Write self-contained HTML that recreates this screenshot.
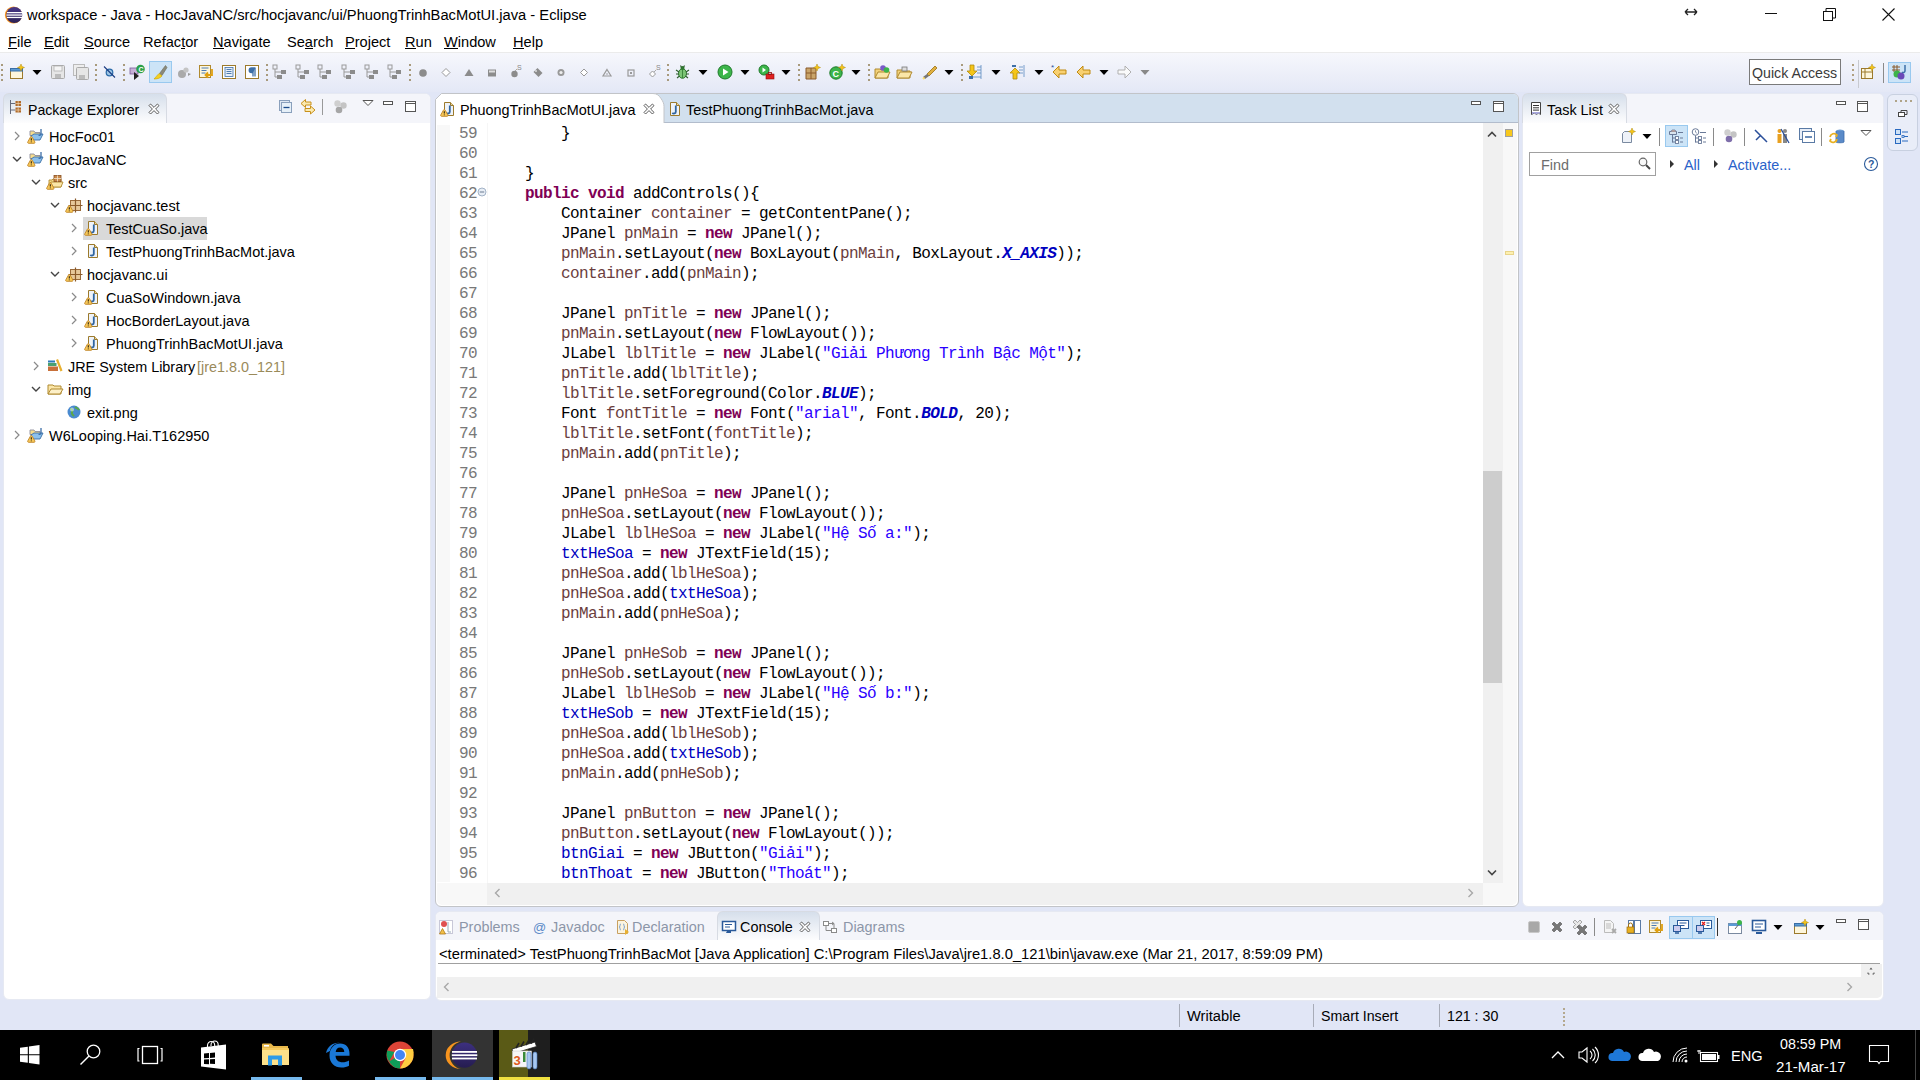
<!DOCTYPE html>
<html><head><meta charset="utf-8"><title>Eclipse</title><style>
*{box-sizing:border-box}
body{margin:0;width:1920px;height:1080px;position:relative;overflow:hidden;background:#e1e6f6;font-family:"Liberation Sans",sans-serif;font-size:14.5px;color:#000}
.a{position:absolute}
.t{position:absolute;white-space:nowrap;line-height:1}
svg{position:absolute;overflow:visible}
.code{position:absolute;left:489px;top:123px;font-family:"Liberation Mono",monospace;font-size:16px;letter-spacing:-0.6px;line-height:20px;white-space:pre;color:#000}
.nums{position:absolute;left:430px;width:47px;top:123px;font-family:"Liberation Mono",monospace;font-size:16px;letter-spacing:-0.6px;line-height:20px;text-align:right;color:#787878}
i{font-style:normal}
i.k{color:#7f0055;font-weight:bold}
i.l{color:#6a3e3e}
i.f{color:#0000c0}
i.s{color:#2a00ff}
i.c{color:#0000c0;font-weight:bold;font-style:italic}
.mn u{text-decoration:none;position:relative}.mn u::after{content:"";position:absolute;left:0;right:0;bottom:0.9px;height:1px;background:#000}
.tree div{position:absolute;white-space:nowrap;line-height:23px;height:23px}
</style></head><body>
<div class="a" style="left:0px;top:0px;width:1920px;height:28px;background:#fff"></div>
<svg style="left:3.5px;top:5.5px;" width="19" height="18" viewBox="0 0 19 18"><defs><linearGradient id="eg" x1="0" y1="0" x2="0" y2="1"><stop offset="0" stop-color="#473788"/><stop offset="1" stop-color="#2c2255"/></linearGradient></defs><circle cx="9.5" cy="9" r="8.6" fill="#f7941e"/><circle cx="10.3" cy="9" r="8" fill="url(#eg)"/><rect x="3" y="6" width="15" height="1.3" fill="#fff"/><rect x="2.5" y="8.4" width="16" height="1.3" fill="#fff"/><rect x="3" y="10.8" width="15" height="1.3" fill="#fff"/></svg>
<div class="t" style="left:27px;top:7.54px;font-size:14.72px;color:#000;font-family:'Liberation Sans';">workspace - Java - HocJavaNC/src/hocjavanc/ui/PhuongTrinhBacMotUI.java - Eclipse</div>
<svg style="left:1684.0px;top:6.0px;" width="14" height="12" viewBox="0 0 14 12"><path d="M1 6h12M1 6l3-3M1 6l3 3M13 6l-3-3M13 6l-3 3" stroke="#222" stroke-width="1.3" fill="none"/></svg>
<div class="a" style="left:1765px;top:13px;width:12px;height:1px;background:#111"></div>
<svg style="left:1822.5px;top:7.5px;" width="13" height="13" viewBox="0 0 13 13"><rect x="0.5" y="3.5" width="9" height="9" fill="none" stroke="#111"/><path d="M3 3.5v-3h9.5v9.5h-3" fill="none" stroke="#111"/></svg>
<svg style="left:1881.5px;top:7.5px;" width="13" height="13" viewBox="0 0 13 13"><path d="M0.5 0.5l12 12M12.5 0.5l-12 12" stroke="#111" stroke-width="1.1"/></svg>
<div class="a" style="left:0px;top:28px;width:1920px;height:24px;background:#fff"></div>
<div class="t mn" style="left:8px;top:34.64px;font-size:14.6px;color:#000;font-family:'Liberation Sans';"><u>F</u>ile</div>
<div class="t mn" style="left:44px;top:34.64px;font-size:14.6px;color:#000;font-family:'Liberation Sans';"><u>E</u>dit</div>
<div class="t mn" style="left:84px;top:34.64px;font-size:14.6px;color:#000;font-family:'Liberation Sans';"><u>S</u>ource</div>
<div class="t mn" style="left:143px;top:34.64px;font-size:14.6px;color:#000;font-family:'Liberation Sans';">Refac<u>t</u>or</div>
<div class="t mn" style="left:213px;top:34.64px;font-size:14.6px;color:#000;font-family:'Liberation Sans';"><u>N</u>avigate</div>
<div class="t mn" style="left:287px;top:34.64px;font-size:14.6px;color:#000;font-family:'Liberation Sans';">Se<u>a</u>rch</div>
<div class="t mn" style="left:345px;top:34.64px;font-size:14.6px;color:#000;font-family:'Liberation Sans';"><u>P</u>roject</div>
<div class="t mn" style="left:405px;top:34.64px;font-size:14.6px;color:#000;font-family:'Liberation Sans';"><u>R</u>un</div>
<div class="t mn" style="left:444px;top:34.64px;font-size:14.6px;color:#000;font-family:'Liberation Sans';"><u>W</u>indow</div>
<div class="t mn" style="left:513px;top:34.64px;font-size:14.6px;color:#000;font-family:'Liberation Sans';"><u>H</u>elp</div>
<div class="a" style="left:0px;top:52px;width:1920px;height:1px;background:#ebebeb"></div>
<div class="a" style="left:0px;top:53px;width:1920px;height:39px;background:linear-gradient(#f6f7fc,#e4e8f6)"></div>
<div class="a" style="left:1px;top:64px;width:2px;height:2px;background:#a89a7c"></div><div class="a" style="left:1px;top:69px;width:2px;height:2px;background:#a89a7c"></div><div class="a" style="left:1px;top:74px;width:2px;height:2px;background:#a89a7c"></div><div class="a" style="left:1px;top:79px;width:2px;height:2px;background:#a89a7c"></div>
<svg style="left:9.0px;top:64.0px;" width="16" height="16" viewBox="0 0 16 16"><rect x="1.5" y="4.5" width="12" height="10" fill="#fdf6dc" stroke="#9c7a2c"/><rect x="1.5" y="4.5" width="12" height="2.5" fill="#5b9bd5" stroke="#3a6ea5"/><path d="M12 0l1 2.5 2.5 1-2.5 1-1 2.5-1-2.5-2.5-1 2.5-1z" fill="#f5c518" stroke="#b08a10" stroke-width=".5"/></svg>
<svg style="left:29.0px;top:64.0px;" width="16" height="16" viewBox="0 0 16 16"><path d="M3.5 6h9l-4.5 5z" fill="#000"/></svg>
<svg style="left:50.0px;top:64.0px;" width="16" height="16" viewBox="0 0 16 16"><rect x="1.5" y="1.5" width="13" height="13" rx="1" fill="#e6e6e6" stroke="#aaa"/><rect x="4" y="2" width="8" height="5" fill="#f5f5f5" stroke="#aaa" stroke-width=".7"/><rect x="5" y="10" width="6" height="4" fill="#bbb"/></svg>
<svg style="left:73.0px;top:64.0px;" width="16" height="16" viewBox="0 0 16 16"><rect x="0.5" y="0.5" width="11" height="11" fill="#eee" stroke="#bbb"/><rect x="3.5" y="3.5" width="12" height="12" rx="1" fill="#e6e6e6" stroke="#aaa"/><rect x="6" y="11" width="6" height="4" fill="#bbb"/></svg>
<div class="a" style="left:95px;top:64px;width:2px;height:2px;background:#a89a7c"></div><div class="a" style="left:95px;top:69px;width:2px;height:2px;background:#a89a7c"></div><div class="a" style="left:95px;top:74px;width:2px;height:2px;background:#a89a7c"></div><div class="a" style="left:95px;top:79px;width:2px;height:2px;background:#a89a7c"></div>
<svg style="left:101.0px;top:64.0px;" width="16" height="16" viewBox="0 0 16 16"><circle cx="8.5" cy="8.5" r="3.3" fill="#9cc4e4" stroke="#2a6aa8" stroke-width="1.2"/><path d="M3 2.5l11 11" stroke="#1a3a80" stroke-width="1.1"/></svg>
<div class="a" style="left:123px;top:64px;width:2px;height:2px;background:#a89a7c"></div><div class="a" style="left:123px;top:69px;width:2px;height:2px;background:#a89a7c"></div><div class="a" style="left:123px;top:74px;width:2px;height:2px;background:#a89a7c"></div><div class="a" style="left:123px;top:79px;width:2px;height:2px;background:#a89a7c"></div>
<svg style="left:129.0px;top:64.0px;" width="16" height="16" viewBox="0 0 16 16"><rect x="1" y="4" width="8" height="6" fill="#c6b0d8" stroke="#7a5c9a" stroke-width=".8"/><path d="M5 8v8l5-4z" fill="#222"/><circle cx="11.5" cy="5" r="4.3" fill="#2aa14a"/><text x="9.5" y="7.5" font-size="7" fill="#fff" font-weight="bold" font-family="Liberation Sans">C</text></svg>
<div class="a" style="left:149px;top:61px;width:23px;height:22px;background:#cce4f7;border:1px solid #99c9ef"></div>
<svg style="left:152.0px;top:64.0px;" width="16" height="16" viewBox="0 0 16 16"><path d="M13.5 1.5l-6 8 2.5 2 5-8z" fill="#8a8a7a" stroke="#6b6b5b" stroke-width=".6"/><path d="M7 9.5l3 2.5c-2 2.5-5 3-8 3 1.5-1.5 2.5-3 5-5.5z" fill="#f5d020" stroke="#c9a400" stroke-width=".6"/></svg>
<svg style="left:176.0px;top:64.0px;" width="16" height="16" viewBox="0 0 16 16"><circle cx="6" cy="10" r="4" fill="#aaa"/><circle cx="10" cy="6" r="2.6" fill="#c4c4c4"/><path d="M12 9l3 1-3 2" fill="#999"/></svg>
<svg style="left:198.0px;top:64.0px;" width="16" height="16" viewBox="0 0 16 16"><rect x="1.5" y="1.5" width="11" height="12" fill="#fdf6dc" stroke="#b08a30"/><path d="M3.5 4h7M3.5 6.5h5M3.5 9h4" stroke="#4a7ab5" stroke-width="1"/><path d="M14 5v6h-6m2-2.5l-2.5 2.5 2.5 2.5" fill="none" stroke="#e0a010" stroke-width="1.8"/></svg>
<svg style="left:221.0px;top:64.0px;" width="16" height="16" viewBox="0 0 16 16"><rect x="1.5" y="1.5" width="13" height="13" fill="#fff" stroke="#9c7a2c"/><rect x="4" y="3.5" width="8" height="9" fill="#e6eef8" stroke="#3d6fa8" stroke-width=".8"/><path d="M5.5 5.5h5M5.5 7.5h5M5.5 9.5h5" stroke="#3d6fa8" stroke-width=".9"/></svg>
<svg style="left:244.0px;top:64.0px;" width="16" height="16" viewBox="0 0 16 16"><rect x="1.5" y="1.5" width="13" height="13" fill="#fff" stroke="#9c7a2c"/><path d="M9 4v8.5M11 4v8.5M11.5 4H7.5a2.3 2.3 0 0 0 0 4.6H9" fill="#3d6fa8" stroke="#3d6fa8" stroke-width="1.3"/></svg>
<div class="a" style="left:266px;top:64px;width:2px;height:2px;background:#a89a7c"></div><div class="a" style="left:266px;top:69px;width:2px;height:2px;background:#a89a7c"></div><div class="a" style="left:266px;top:74px;width:2px;height:2px;background:#a89a7c"></div><div class="a" style="left:266px;top:79px;width:2px;height:2px;background:#a89a7c"></div>
<svg style="left:272.0px;top:64.0px;" width="16" height="16" viewBox="0 0 16 16"><rect x="1" y="1" width="4" height="4" fill="none" stroke="#999"/><rect x="9" y="6" width="5" height="4" fill="#8c8c8c"/><rect x="5" y="11" width="5" height="4" fill="#8c8c8c"/><path d="M3 5v8h2M3 8h6" stroke="#999" fill="none"/></svg>
<svg style="left:295.0px;top:64.0px;" width="16" height="16" viewBox="0 0 16 16"><rect x="1" y="1" width="4" height="4" fill="none" stroke="#999"/><rect x="9" y="6" width="5" height="4" fill="#8c8c8c"/><rect x="5" y="11" width="5" height="4" fill="#8c8c8c"/><path d="M3 5v8h2M3 8h6" stroke="#999" fill="none"/></svg>
<svg style="left:317.0px;top:64.0px;" width="16" height="16" viewBox="0 0 16 16"><rect x="1" y="1" width="4" height="4" fill="none" stroke="#999"/><rect x="9" y="6" width="5" height="4" fill="#8c8c8c"/><rect x="5" y="11" width="5" height="4" fill="#8c8c8c"/><path d="M3 5v8h2M3 8h6" stroke="#999" fill="none"/></svg>
<svg style="left:341.0px;top:64.0px;" width="16" height="16" viewBox="0 0 16 16"><rect x="1" y="1" width="4" height="4" fill="none" stroke="#999"/><rect x="9" y="6" width="5" height="4" fill="#8c8c8c"/><rect x="5" y="11" width="5" height="4" fill="#8c8c8c"/><path d="M3 5v8h2M3 8h6" stroke="#999" fill="none"/></svg>
<svg style="left:364.0px;top:64.0px;" width="16" height="16" viewBox="0 0 16 16"><rect x="1" y="1" width="4" height="4" fill="none" stroke="#999"/><rect x="9" y="6" width="5" height="4" fill="#8c8c8c"/><rect x="5" y="11" width="5" height="4" fill="#8c8c8c"/><path d="M3 5v8h2M3 8h6" stroke="#999" fill="none"/></svg>
<svg style="left:387.0px;top:64.0px;" width="16" height="16" viewBox="0 0 16 16"><rect x="1" y="1" width="4" height="4" fill="none" stroke="#999"/><rect x="9" y="6" width="5" height="4" fill="#8c8c8c"/><rect x="5" y="11" width="5" height="4" fill="#8c8c8c"/><path d="M3 5v8h2M3 8h6" stroke="#999" fill="none"/></svg>
<div class="a" style="left:409px;top:64px;width:2px;height:2px;background:#a89a7c"></div><div class="a" style="left:409px;top:69px;width:2px;height:2px;background:#a89a7c"></div><div class="a" style="left:409px;top:74px;width:2px;height:2px;background:#a89a7c"></div><div class="a" style="left:409px;top:79px;width:2px;height:2px;background:#a89a7c"></div>
<svg style="left:415.0px;top:64.0px;" width="16" height="16" viewBox="0 0 16 16"><circle cx="8" cy="9" r="3.8" fill="#8c8c8c"/></svg>
<svg style="left:438.0px;top:64.0px;" width="16" height="16" viewBox="0 0 16 16"><path d="M8 4.5l4 4-4 4-4-4z" fill="#fff" stroke="#999"/></svg>
<svg style="left:461.0px;top:64.0px;" width="16" height="16" viewBox="0 0 16 16"><path d="M8 5l4.5 7h-9z" fill="#8c8c8c"/></svg>
<svg style="left:484.0px;top:64.0px;" width="16" height="16" viewBox="0 0 16 16"><rect x="4" y="5.5" width="8" height="7" fill="#8c8c8c"/><rect x="5" y="6.5" width="6" height="2" fill="#ddd"/></svg>
<svg style="left:508.0px;top:64.0px;" width="16" height="16" viewBox="0 0 16 16"><circle cx="6.5" cy="10" r="3.2" fill="#8c8c8c"/><path d="M7 7l2-2" stroke="#aaa"/><text x="9" y="6" font-size="7" fill="#888" font-family="Liberation Sans">S</text></svg>
<svg style="left:530.0px;top:64.0px;" width="16" height="16" viewBox="0 0 16 16"><path d="M3.5 8l4-4 5 5-4 4z" fill="#8c8c8c"/><circle cx="6" cy="7" r="1" fill="#ddd"/></svg>
<svg style="left:553.0px;top:64.0px;" width="16" height="16" viewBox="0 0 16 16"><circle cx="8" cy="8.5" r="3.5" fill="#999"/><circle cx="8" cy="8.5" r="1.6" fill="#eee"/></svg>
<svg style="left:576.0px;top:64.0px;" width="16" height="16" viewBox="0 0 16 16"><path d="M8 5l3.5 3.5-3.5 3.5-3.5-3.5z" fill="#fff" stroke="#999"/></svg>
<svg style="left:599.0px;top:64.0px;" width="16" height="16" viewBox="0 0 16 16"><path d="M8 5.5l4 6.5h-8z" fill="none" stroke="#999" stroke-width="1.2"/><circle cx="8" cy="10" r=".8" fill="#999"/></svg>
<svg style="left:623.0px;top:64.0px;" width="16" height="16" viewBox="0 0 16 16"><rect x="5" y="6" width="6" height="6" fill="none" stroke="#999" stroke-width="1.2"/><rect x="7" y="8" width="2" height="2" fill="#999"/></svg>
<svg style="left:646.0px;top:64.0px;" width="16" height="16" viewBox="0 0 16 16"><path d="M3.5 10l3-3 3 3-3 3z" fill="#fff" stroke="#999"/><path d="M8 8l2-2" stroke="#aaa"/><text x="10" y="6" font-size="7" fill="#888" font-family="Liberation Sans">S</text></svg>
<div class="a" style="left:667px;top:64px;width:2px;height:2px;background:#a89a7c"></div><div class="a" style="left:667px;top:69px;width:2px;height:2px;background:#a89a7c"></div><div class="a" style="left:667px;top:74px;width:2px;height:2px;background:#a89a7c"></div><div class="a" style="left:667px;top:79px;width:2px;height:2px;background:#a89a7c"></div>
<svg style="left:674.0px;top:64.0px;" width="16" height="16" viewBox="0 0 16 16"><ellipse cx="8.5" cy="9.5" rx="4" ry="4.8" fill="#7cc576" stroke="#2e7a2e"/><circle cx="8.5" cy="4" r="2" fill="#2e7a2e"/><path d="M2 6l3 2M2 10h3M3 14l2.5-2M15 6l-3 2M15 10h-3M14 14l-2.5-2M6.5 1.5l1 2M10.5 1.5l-1 2" stroke="#2e5e2e" stroke-width="1.1"/><path d="M8.5 6v8" stroke="#2e7a2e" stroke-width=".8"/></svg>
<svg style="left:695.0px;top:64.0px;" width="16" height="16" viewBox="0 0 16 16"><path d="M3.5 6h9l-4.5 5z" fill="#000"/></svg>
<svg style="left:717.0px;top:64.0px;" width="16" height="16" viewBox="0 0 16 16"><circle cx="8" cy="8" r="7" fill="#3cb54a" stroke="#1e7a2a"/><path d="M6 4.5v7l5.5-3.5z" fill="#fff"/></svg>
<svg style="left:737.0px;top:64.0px;" width="16" height="16" viewBox="0 0 16 16"><path d="M3.5 6h9l-4.5 5z" fill="#000"/></svg>
<svg style="left:758.0px;top:64.0px;" width="16" height="16" viewBox="0 0 16 16"><circle cx="6" cy="6" r="5" fill="#3cb54a" stroke="#1e7a2a"/><path d="M4.5 3.5v5l3.5-2.5z" fill="#fff"/><rect x="8" y="10" width="8" height="5" fill="#e02020" stroke="#901010" stroke-width=".6"/><rect x="10.5" y="8.5" width="3" height="2" fill="none" stroke="#901010" stroke-width=".8"/></svg>
<svg style="left:778.0px;top:64.0px;" width="16" height="16" viewBox="0 0 16 16"><path d="M3.5 6h9l-4.5 5z" fill="#000"/></svg>
<div class="a" style="left:798px;top:64px;width:2px;height:2px;background:#a89a7c"></div><div class="a" style="left:798px;top:69px;width:2px;height:2px;background:#a89a7c"></div><div class="a" style="left:798px;top:74px;width:2px;height:2px;background:#a89a7c"></div><div class="a" style="left:798px;top:79px;width:2px;height:2px;background:#a89a7c"></div>
<svg style="left:804.0px;top:64.0px;" width="16" height="16" viewBox="0 0 16 16"><path d="M2 4h10v11H2z" fill="#c9a46a" stroke="#8a5a2a"/><path d="M2 9h10M7 4v11" stroke="#8a5a2a"/><path d="M13 0l1 2.5 2.5 1-2.5 1-1 2.5-1-2.5-2.5-1 2.5-1z" fill="#f5c518" stroke="#b08a10" stroke-width=".5"/></svg>
<svg style="left:829.0px;top:64.0px;" width="16" height="16" viewBox="0 0 16 16"><circle cx="7" cy="9" r="6.2" fill="#3cb54a" stroke="#1e7a2a"/><text x="3.5" y="12.5" font-size="9" fill="#fff" font-weight="bold" font-family="Liberation Sans">C</text><path d="M13 0l1 2.5 2.5 1-2.5 1-1 2.5-1-2.5-2.5-1 2.5-1z" fill="#f5c518" stroke="#b08a10" stroke-width=".5"/></svg>
<svg style="left:848.0px;top:64.0px;" width="16" height="16" viewBox="0 0 16 16"><path d="M3.5 6h9l-4.5 5z" fill="#000"/></svg>
<div class="a" style="left:868px;top:64px;width:2px;height:2px;background:#a89a7c"></div><div class="a" style="left:868px;top:69px;width:2px;height:2px;background:#a89a7c"></div><div class="a" style="left:868px;top:74px;width:2px;height:2px;background:#a89a7c"></div><div class="a" style="left:868px;top:79px;width:2px;height:2px;background:#a89a7c"></div>
<svg style="left:874.0px;top:64.0px;" width="16" height="16" viewBox="0 0 16 16"><path d="M1 5h5l1 1h7v8H1z" fill="#f3d27a" stroke="#b08a30"/><path d="M1 14l3-6h12l-3 6z" fill="#fbe6a8" stroke="#b08a30"/><circle cx="9" cy="4" r="2.8" fill="#7a5ac8"/><circle cx="12.5" cy="6" r="2.8" fill="#3cb54a"/></svg>
<svg style="left:896.0px;top:64.0px;" width="16" height="16" viewBox="0 0 16 16"><path d="M1 6h5l1 1h7v7H1z" fill="#f3d27a" stroke="#b08a30"/><path d="M1 14l3-6h12l-3 6z" fill="#fbe6a8" stroke="#b08a30"/><rect x="6" y="3" width="5" height="4" fill="#ddd" stroke="#777" stroke-width=".8"/></svg>
<svg style="left:921.0px;top:64.0px;" width="16" height="16" viewBox="0 0 16 16"><path d="M14 2l-8 8 2 2 8-8z" fill="#e0b040" stroke="#9a7010" stroke-width=".8"/><path d="M6 10l2 2-4 3-2 0 0-2z" fill="#777"/><path d="M2 15l1.5-1.5" stroke="#ffe070" stroke-width="2"/></svg>
<svg style="left:941.0px;top:64.0px;" width="16" height="16" viewBox="0 0 16 16"><path d="M3.5 6h9l-4.5 5z" fill="#000"/></svg>
<div class="a" style="left:961px;top:64px;width:2px;height:2px;background:#a89a7c"></div><div class="a" style="left:961px;top:69px;width:2px;height:2px;background:#a89a7c"></div><div class="a" style="left:961px;top:74px;width:2px;height:2px;background:#a89a7c"></div><div class="a" style="left:961px;top:79px;width:2px;height:2px;background:#a89a7c"></div>
<svg style="left:966.0px;top:64.0px;" width="16" height="16" viewBox="0 0 16 16"><path d="M4 1h4v6h3l-5 5-5-5h3z" fill="#f5c518" stroke="#b08a10" stroke-width=".8"/><path d="M11 3h4M11 6h4M11 9h4M3 13h12M15 1v14" stroke="#5a8ac0" stroke-width=".8"/><rect x="3" y="12" width="4" height="3" fill="#3d6fa8"/></svg>
<svg style="left:988.0px;top:64.0px;" width="16" height="16" viewBox="0 0 16 16"><path d="M3.5 6h9l-4.5 5z" fill="#000"/></svg>
<svg style="left:1009.0px;top:64.0px;" width="16" height="16" viewBox="0 0 16 16"><path d="M4 15h4V9h3L6 4 1 9h3z" fill="#f5c518" stroke="#b08a10" stroke-width=".8"/><path d="M10 3h4M10 6h4M10 9h4M15 1v12" stroke="#5a8ac0" stroke-width=".8"/><rect x="3" y="1" width="4" height="2" fill="#3d6fa8"/></svg>
<svg style="left:1031.0px;top:64.0px;" width="16" height="16" viewBox="0 0 16 16"><path d="M3.5 6h9l-4.5 5z" fill="#000"/></svg>
<svg style="left:1051.0px;top:64.0px;" width="16" height="16" viewBox="0 0 16 16"><path d="M15 6H8V2L2 8l6 6v-4h7z" fill="#f8d070" stroke="#c08a10" stroke-width="1"/><text x="0" y="6" font-size="8" fill="#2a4f9a" font-family="Liberation Sans">*</text></svg>
<svg style="left:1075.0px;top:64.0px;" width="16" height="16" viewBox="0 0 16 16"><path d="M15 6H8V2L2 8l6 6v-4h7z" fill="#f8d070" stroke="#c08a10" stroke-width="1"/></svg>
<svg style="left:1096.0px;top:64.0px;" width="16" height="16" viewBox="0 0 16 16"><path d="M3.5 6h9l-4.5 5z" fill="#000"/></svg>
<svg style="left:1117.0px;top:64.0px;" width="16" height="16" viewBox="0 0 16 16"><path d="M1 6h7V2l6 6-6 6v-4H1z" fill="#fafafa" stroke="#b0b0b0" stroke-width="1"/></svg>
<svg style="left:1137.0px;top:64.0px;" width="16" height="16" viewBox="0 0 16 16"><path d="M3.5 6h9l-4.5 5z" fill="#888"/></svg>
<div class="a" style="left:1749px;top:59px;width:92px;height:26px;background:#fff;border:1px solid #7a7a7a"></div>
<div class="t" style="left:1752px;top:65.98px;font-size:14.2px;color:#3a3a3a;font-family:'Liberation Sans';">Quick Access</div>
<div class="a" style="left:1852px;top:64px;width:2px;height:2px;background:#b0a080"></div><div class="a" style="left:1852px;top:69px;width:2px;height:2px;background:#b0a080"></div><div class="a" style="left:1852px;top:74px;width:2px;height:2px;background:#b0a080"></div><div class="a" style="left:1852px;top:79px;width:2px;height:2px;background:#b0a080"></div>
<div class="a" style="left:1858px;top:60px;width:1px;height:28px;background:#c8cad0"></div>
<svg style="left:1860.0px;top:64.0px;" width="16" height="16" viewBox="0 0 16 16"><rect x="1.5" y="4.5" width="11" height="10" fill="#fdf6dc" stroke="#9c7a2c"/><path d="M1.5 8h11M5 4.5v10" stroke="#9c7a2c"/><path d="M12 0l1 2.5 2.5 1-2.5 1-1 2.5-1-2.5-2.5-1 2.5-1z" fill="#f5c518" stroke="#b08a10" stroke-width=".5"/></svg>
<div class="a" style="left:1883px;top:63px;width:1px;height:20px;background:#8a8a8a"></div>
<div class="a" style="left:1888px;top:62px;width:23px;height:21px;background:#cce4f7;border:1px solid #99c9ef"></div>
<svg style="left:1892.0px;top:64.0px;" width="16" height="16" viewBox="0 0 16 16"><path d="M2 1v7M5 1v7M0 3h8M0 6h8" stroke="#8a5a2a" stroke-width="1"/><circle cx="5" cy="10" r="3.5" fill="#3cb54a"/><circle cx="9" cy="12" r="3.5" fill="#6a4ab8"/><path d="M13 1v6c0 1.5-2 2-3 1" fill="none" stroke="#3d6fa8" stroke-width="1.5"/></svg>
<div class="a" style="left:3px;top:93px;width:428px;height:907px;background:#fff;border-radius:6px;border:1px solid #e6e9f2"></div>
<div class="a" style="left:4px;top:94px;width:426px;height:29px;background:#f4f5fa;border-radius:5px 5px 0 0"></div>
<div class="a" style="left:3px;top:93px;width:164px;height:30px;background:linear-gradient(#d6dfeb,#fdfdfe);border-radius:6px 6px 0 0;border:1px solid #d7dbe3;border-bottom:none"></div>
<svg style="left:7.0px;top:99.0px;" width="16" height="16" viewBox="0 0 16 16"><path d="M3.5 1v14M3.5 4.5h5M3.5 11h5" stroke="#666a7a" stroke-width="1"/><rect x="8.5" y="2" width="5.5" height="5" fill="#b06a2a"/><rect x="8.5" y="8.5" width="5.5" height="5" fill="#b06a2a"/><path d="M11.2 2v5M8.5 4.5h5.5M11.2 8.5v5M8.5 11h5.5" stroke="#f2d8b8" stroke-width=".7"/></svg>
<div class="t" style="left:28px;top:103.06px;font-size:14.1px;color:#000;font-family:'Liberation Sans';">Package Explorer</div>
<svg style="left:146.0px;top:101.0px;" width="16" height="16" viewBox="0 0 16 16"><path d="M3 4.6L4.6 3 8 6.4 11.4 3 13 4.6 9.6 8 13 11.4 11.4 13 8 9.6 4.6 13 3 11.4 6.4 8z" fill="#fff" stroke="#5a5a5a" stroke-width="1" stroke-linejoin="round"/></svg>
<svg style="left:278.0px;top:99.0px;" width="16" height="16" viewBox="0 0 16 16"><rect x="1.5" y="1.5" width="10" height="10" fill="#dfe8f2" stroke="#8aa0bc"/><rect x="3.5" y="3.5" width="10" height="10" fill="#e6f0f8" stroke="#8aa0bc"/><path d="M5.5 8.5h6" stroke="#1a4a8a" stroke-width="1.3"/></svg>
<svg style="left:300.0px;top:99.0px;" width="16" height="16" viewBox="0 0 16 16"><path d="M5.5 .5L1 4.5l4.5 4V6h5.5V3H5.5z" fill="#fbeab0" stroke="#c8901a" stroke-width="1" stroke-linejoin="round"/><path d="M10.5 7l4.5 4-4.5 4v-2.5H5v-3h5.5z" fill="#fbeab0" stroke="#c8901a" stroke-width="1" stroke-linejoin="round"/></svg>
<div class="a" style="left:322px;top:99px;width:1px;height:16px;background:#999"></div>
<svg style="left:332.0px;top:99.0px;" width="16" height="16" viewBox="0 0 16 16"><circle cx="5.5" cy="4.5" r="3.2" fill="#cfcfcf"/><circle cx="11.5" cy="6.5" r="3.2" fill="#c4c4c4"/><circle cx="7" cy="11" r="3.3" fill="#a6a6a6"/></svg>
<svg style="left:360.0px;top:96.0px;" width="16" height="16" viewBox="0 0 16 16"><path d="M3 4.5h10l-5 5z" fill="#fff" stroke="#555" stroke-width="1"/></svg>
<svg style="left:380.0px;top:95.0px;" width="16" height="16" viewBox="0 0 16 16"><rect x="3.5" y="6.5" width="9" height="3" fill="#fff" stroke="#555" stroke-width="1"/></svg>
<svg style="left:402.0px;top:98.0px;" width="16" height="16" viewBox="0 0 16 16"><rect x="3.5" y="3.5" width="10" height="10" fill="#fff" stroke="#555" stroke-width="1"/><path d="M3.5 5.5h10" stroke="#555"/></svg>
<svg style="left:9.0px;top:128.0px;" width="16" height="16" viewBox="0 0 16 16"><path d="M6 4l4 4-4 4" fill="none" stroke="#8a8a8a" stroke-width="1.2"/></svg>
<svg style="left:27.5px;top:127.5px;" width="17" height="17" viewBox="0 0 17 17"><path d="M2 3h4l1 1.5h5v3H2z" fill="#f6dc8c" stroke="#8c8c9c" stroke-width=".9"/><path d="M3 8l3-2h9l-3 6H3z" fill="#8cc0ec" stroke="#3a6ea5" stroke-width=".9"/><path d="M13 1v5c0 1.3-1.5 1.6-2.3.9" fill="none" stroke="#3d6fa8" stroke-width="1.3"/><path d="M3.3 8.6c.5 0 .8.3 1.1.9l2.4 4.4c.4.8 0 1.4-.8 1.4H.6c-.8 0-1.2-.6-.8-1.4l2.4-4.4c.3-.6.6-.9 1.1-.9z" fill="#f8c858" stroke="#c08428" stroke-width=".9"/><path d="M3.3 10.2v2.4M3.3 13.4v.8" stroke="#2a2010" stroke-width="1.1"/></svg>
<div class="t" style="left:49px;top:129.73px;font-size:14.5px;color:#000;font-family:'Liberation Sans';">HocFoc01</div>
<svg style="left:9.0px;top:151.0px;" width="16" height="16" viewBox="0 0 16 16"><path d="M4 6l4 4 4-4" fill="none" stroke="#444" stroke-width="1.4"/></svg>
<svg style="left:27.5px;top:150.5px;" width="17" height="17" viewBox="0 0 17 17"><path d="M2 3h4l1 1.5h5v3H2z" fill="#f6dc8c" stroke="#8c8c9c" stroke-width=".9"/><path d="M3 8l3-2h9l-3 6H3z" fill="#8cc0ec" stroke="#3a6ea5" stroke-width=".9"/><path d="M13 1v5c0 1.3-1.5 1.6-2.3.9" fill="none" stroke="#3d6fa8" stroke-width="1.3"/><path d="M3.3 8.6c.5 0 .8.3 1.1.9l2.4 4.4c.4.8 0 1.4-.8 1.4H.6c-.8 0-1.2-.6-.8-1.4l2.4-4.4c.3-.6.6-.9 1.1-.9z" fill="#f8c858" stroke="#c08428" stroke-width=".9"/><path d="M3.3 10.2v2.4M3.3 13.4v.8" stroke="#2a2010" stroke-width="1.1"/></svg>
<div class="t" style="left:49px;top:152.73px;font-size:14.5px;color:#000;font-family:'Liberation Sans';">HocJavaNC</div>
<svg style="left:28.0px;top:174.0px;" width="16" height="16" viewBox="0 0 16 16"><path d="M4 6l4 4 4-4" fill="none" stroke="#444" stroke-width="1.4"/></svg>
<svg style="left:46.5px;top:174.0px;" width="17" height="16" viewBox="0 0 17 16"><path d="M2 6h3l1-1h8v8H2z" fill="#f6dc8c" stroke="#b08a30" stroke-width=".9"/><path d="M2 13l2-5h12l-2 5z" fill="#fbe6a8" stroke="#b08a30" stroke-width=".9"/><rect x="7" y="1.5" width="7" height="6" fill="#c9884a" stroke="#8a5020" stroke-width=".8"/><path d="M10.5 1.5v6M7 4.5h7" stroke="#f4e4cc" stroke-width=".8"/><path d="M3.3 8.6c.5 0 .8.3 1.1.9l2.4 4.4c.4.8 0 1.4-.8 1.4H.6c-.8 0-1.2-.6-.8-1.4l2.4-4.4c.3-.6.6-.9 1.1-.9z" fill="#f8c858" stroke="#c08428" stroke-width=".9"/><path d="M3.3 10.2v2.4M3.3 13.4v.8" stroke="#2a2010" stroke-width="1.1"/></svg>
<div class="t" style="left:68px;top:175.73px;font-size:14.5px;color:#000;font-family:'Liberation Sans';">src</div>
<svg style="left:47.0px;top:197.0px;" width="16" height="16" viewBox="0 0 16 16"><path d="M4 6l4 4 4-4" fill="none" stroke="#444" stroke-width="1.4"/></svg>
<svg style="left:66.0px;top:197.0px;" width="16" height="16" viewBox="0 0 16 16"><rect x="4.5" y="3.5" width="10" height="10" fill="#e6c79a" stroke="#9a6a3a"/><path d="M9.5 1.5v14M2.5 8.5h14" stroke="#8a5a2a" stroke-width="1.2"/><path d="M3.3 8.6c.5 0 .8.3 1.1.9l2.4 4.4c.4.8 0 1.4-.8 1.4H.6c-.8 0-1.2-.6-.8-1.4l2.4-4.4c.3-.6.6-.9 1.1-.9z" fill="#f8c858" stroke="#c08428" stroke-width=".9"/><path d="M3.3 10.2v2.4M3.3 13.4v.8" stroke="#2a2010" stroke-width="1.1"/></svg>
<div class="t" style="left:87px;top:198.73px;font-size:14.5px;color:#000;font-family:'Liberation Sans';">hocjavanc.test</div>
<div class="a" style="left:83px;top:217px;width:124px;height:23px;background:#d9d9d9"></div>
<svg style="left:66.0px;top:220.0px;" width="16" height="16" viewBox="0 0 16 16"><path d="M6 4l4 4-4 4" fill="none" stroke="#8a8a8a" stroke-width="1.2"/></svg>
<svg style="left:85.0px;top:220.0px;" width="16" height="16" viewBox="0 0 16 16"><path d="M3.5 1.5h6l3 3v10h-9z" fill="#eef3fa" stroke="#9c7a2c"/><path d="M9.5 1.5v3h3" fill="#e8d49c" stroke="#9c7a2c"/><path d="M8.8 4.5v6.2c0 2-2.3 2.3-3.5 1.3" fill="none" stroke="#2e64a0" stroke-width="1.8"/><path d="M3.3 8.6c.5 0 .8.3 1.1.9l2.4 4.4c.4.8 0 1.4-.8 1.4H.6c-.8 0-1.2-.6-.8-1.4l2.4-4.4c.3-.6.6-.9 1.1-.9z" fill="#f8c858" stroke="#c08428" stroke-width=".9"/><path d="M3.3 10.2v2.4M3.3 13.4v.8" stroke="#2a2010" stroke-width="1.1"/></svg>
<div class="t" style="left:106px;top:221.73px;font-size:14.5px;color:#000;font-family:'Liberation Sans';">TestCuaSo.java</div>
<svg style="left:66.0px;top:243.0px;" width="16" height="16" viewBox="0 0 16 16"><path d="M6 4l4 4-4 4" fill="none" stroke="#8a8a8a" stroke-width="1.2"/></svg>
<svg style="left:85.0px;top:243.0px;" width="16" height="16" viewBox="0 0 16 16"><path d="M3.5 1.5h6l3 3v10h-9z" fill="#eef3fa" stroke="#9c7a2c"/><path d="M9.5 1.5v3h3" fill="#e8d49c" stroke="#9c7a2c"/><path d="M8.8 4.5v6.2c0 2-2.3 2.3-3.5 1.3" fill="none" stroke="#2e64a0" stroke-width="1.8"/></svg>
<div class="t" style="left:106px;top:244.73px;font-size:14.5px;color:#000;font-family:'Liberation Sans';">TestPhuongTrinhBacMot.java</div>
<svg style="left:47.0px;top:266.0px;" width="16" height="16" viewBox="0 0 16 16"><path d="M4 6l4 4 4-4" fill="none" stroke="#444" stroke-width="1.4"/></svg>
<svg style="left:66.0px;top:266.0px;" width="16" height="16" viewBox="0 0 16 16"><rect x="4.5" y="3.5" width="10" height="10" fill="#e6c79a" stroke="#9a6a3a"/><path d="M9.5 1.5v14M2.5 8.5h14" stroke="#8a5a2a" stroke-width="1.2"/><path d="M3.3 8.6c.5 0 .8.3 1.1.9l2.4 4.4c.4.8 0 1.4-.8 1.4H.6c-.8 0-1.2-.6-.8-1.4l2.4-4.4c.3-.6.6-.9 1.1-.9z" fill="#f8c858" stroke="#c08428" stroke-width=".9"/><path d="M3.3 10.2v2.4M3.3 13.4v.8" stroke="#2a2010" stroke-width="1.1"/></svg>
<div class="t" style="left:87px;top:267.73px;font-size:14.5px;color:#000;font-family:'Liberation Sans';">hocjavanc.ui</div>
<svg style="left:66.0px;top:289.0px;" width="16" height="16" viewBox="0 0 16 16"><path d="M6 4l4 4-4 4" fill="none" stroke="#8a8a8a" stroke-width="1.2"/></svg>
<svg style="left:85.0px;top:289.0px;" width="16" height="16" viewBox="0 0 16 16"><path d="M3.5 1.5h6l3 3v10h-9z" fill="#eef3fa" stroke="#9c7a2c"/><path d="M9.5 1.5v3h3" fill="#e8d49c" stroke="#9c7a2c"/><path d="M8.8 4.5v6.2c0 2-2.3 2.3-3.5 1.3" fill="none" stroke="#2e64a0" stroke-width="1.8"/><path d="M3.3 8.6c.5 0 .8.3 1.1.9l2.4 4.4c.4.8 0 1.4-.8 1.4H.6c-.8 0-1.2-.6-.8-1.4l2.4-4.4c.3-.6.6-.9 1.1-.9z" fill="#f8c858" stroke="#c08428" stroke-width=".9"/><path d="M3.3 10.2v2.4M3.3 13.4v.8" stroke="#2a2010" stroke-width="1.1"/></svg>
<div class="t" style="left:106px;top:290.73px;font-size:14.5px;color:#000;font-family:'Liberation Sans';">CuaSoWindown.java</div>
<svg style="left:66.0px;top:312.0px;" width="16" height="16" viewBox="0 0 16 16"><path d="M6 4l4 4-4 4" fill="none" stroke="#8a8a8a" stroke-width="1.2"/></svg>
<svg style="left:85.0px;top:312.0px;" width="16" height="16" viewBox="0 0 16 16"><path d="M3.5 1.5h6l3 3v10h-9z" fill="#eef3fa" stroke="#9c7a2c"/><path d="M9.5 1.5v3h3" fill="#e8d49c" stroke="#9c7a2c"/><path d="M8.8 4.5v6.2c0 2-2.3 2.3-3.5 1.3" fill="none" stroke="#2e64a0" stroke-width="1.8"/><path d="M3.3 8.6c.5 0 .8.3 1.1.9l2.4 4.4c.4.8 0 1.4-.8 1.4H.6c-.8 0-1.2-.6-.8-1.4l2.4-4.4c.3-.6.6-.9 1.1-.9z" fill="#f8c858" stroke="#c08428" stroke-width=".9"/><path d="M3.3 10.2v2.4M3.3 13.4v.8" stroke="#2a2010" stroke-width="1.1"/></svg>
<div class="t" style="left:106px;top:313.73px;font-size:14.5px;color:#000;font-family:'Liberation Sans';">HocBorderLayout.java</div>
<svg style="left:66.0px;top:335.0px;" width="16" height="16" viewBox="0 0 16 16"><path d="M6 4l4 4-4 4" fill="none" stroke="#8a8a8a" stroke-width="1.2"/></svg>
<svg style="left:85.0px;top:335.0px;" width="16" height="16" viewBox="0 0 16 16"><path d="M3.5 1.5h6l3 3v10h-9z" fill="#eef3fa" stroke="#9c7a2c"/><path d="M9.5 1.5v3h3" fill="#e8d49c" stroke="#9c7a2c"/><path d="M8.8 4.5v6.2c0 2-2.3 2.3-3.5 1.3" fill="none" stroke="#2e64a0" stroke-width="1.8"/><path d="M3.3 8.6c.5 0 .8.3 1.1.9l2.4 4.4c.4.8 0 1.4-.8 1.4H.6c-.8 0-1.2-.6-.8-1.4l2.4-4.4c.3-.6.6-.9 1.1-.9z" fill="#f8c858" stroke="#c08428" stroke-width=".9"/><path d="M3.3 10.2v2.4M3.3 13.4v.8" stroke="#2a2010" stroke-width="1.1"/></svg>
<div class="t" style="left:106px;top:336.73px;font-size:14.5px;color:#000;font-family:'Liberation Sans';">PhuongTrinhBacMotUI.java</div>
<svg style="left:28.0px;top:358.0px;" width="16" height="16" viewBox="0 0 16 16"><path d="M6 4l4 4-4 4" fill="none" stroke="#8a8a8a" stroke-width="1.2"/></svg>
<svg style="left:47.0px;top:358.0px;" width="16" height="16" viewBox="0 0 16 16"><rect x="1" y="2.5" width="7" height="2" fill="#2e7ab8"/><rect x="1" y="5" width="8.5" height="3" fill="#4aa070"/><rect x="1" y="8.5" width="10" height="4.5" fill="#c8703a"/><path d="M10 1.5l4.5 11.5" stroke="#e8b030" stroke-width="2.2"/></svg>
<div class="t" style="left:68px;top:359.81px;font-size:14.4px;color:#000;font-family:'Liberation Sans';">JRE System Library</div>
<div class="t" style="left:197px;top:359.81px;font-size:14.4px;color:#9a8a5a;font-family:'Liberation Sans';">[jre1.8.0_121]</div>
<svg style="left:28.0px;top:381.0px;" width="16" height="16" viewBox="0 0 16 16"><path d="M4 6l4 4 4-4" fill="none" stroke="#444" stroke-width="1.4"/></svg>
<svg style="left:47.0px;top:381.0px;" width="16" height="16" viewBox="0 0 16 16"><path d="M1 4h5l1 1h7v8H1z" fill="#fbe6a8" stroke="#b08a30"/><path d="M1 13l3-5h12l-3 5z" fill="#fdf0c8" stroke="#b08a30"/></svg>
<div class="t" style="left:68px;top:382.73px;font-size:14.5px;color:#000;font-family:'Liberation Sans';">img</div>
<svg style="left:66.0px;top:404.0px;" width="16" height="16" viewBox="0 0 16 16"><circle cx="8" cy="8" r="6.5" fill="#4a8ad0"/><path d="M4 5c2 0 3 1 2 3s1 3 2 4M9 3c1 1 3 1 4 3" stroke="#5aa84a" stroke-width="2" fill="none"/><circle cx="6" cy="5.5" r="2" fill="#fff" opacity=".5"/></svg>
<div class="t" style="left:87px;top:405.73px;font-size:14.5px;color:#000;font-family:'Liberation Sans';">exit.png</div>
<svg style="left:9.0px;top:427.0px;" width="16" height="16" viewBox="0 0 16 16"><path d="M6 4l4 4-4 4" fill="none" stroke="#8a8a8a" stroke-width="1.2"/></svg>
<svg style="left:27.5px;top:426.5px;" width="17" height="17" viewBox="0 0 17 17"><path d="M2 3h4l1 1.5h5v3H2z" fill="#f6dc8c" stroke="#8c8c9c" stroke-width=".9"/><path d="M3 8l3-2h9l-3 6H3z" fill="#8cc0ec" stroke="#3a6ea5" stroke-width=".9"/><path d="M13 1v5c0 1.3-1.5 1.6-2.3.9" fill="none" stroke="#3d6fa8" stroke-width="1.3"/><path d="M3.3 8.6c.5 0 .8.3 1.1.9l2.4 4.4c.4.8 0 1.4-.8 1.4H.6c-.8 0-1.2-.6-.8-1.4l2.4-4.4c.3-.6.6-.9 1.1-.9z" fill="#f8c858" stroke="#c08428" stroke-width=".9"/><path d="M3.3 10.2v2.4M3.3 13.4v.8" stroke="#2a2010" stroke-width="1.1"/></svg>
<div class="t" style="left:49px;top:428.73px;font-size:14.5px;color:#000;font-family:'Liberation Sans';">W6Looping.Hai.T162950</div>
<div class="a" style="left:435px;top:93px;width:1084px;height:814px;background:#fff;border:1px solid #c2c4c8;border-radius:6px"></div>
<div class="a" style="left:436px;top:94px;width:1082px;height:28px;background:#d2e0ee;border-radius:5px 5px 0 0"></div>
<div class="a" style="left:436px;top:122px;width:1082px;height:1px;background:#b2bccc"></div>
<svg style="left:435px;top:93px" width="240" height="31" viewBox="0 0 240 31"><path d="M-1 -1H8L-1 8z" fill="#e1e6f6"/><path d="M0.5 30V6.5L6.5 0.5H218c4 0 6 2 8 5s3 5 3 8V30" fill="#fff" stroke="#c2c4c8"/><rect x="1" y="28" width="227" height="3" fill="#fff"/></svg>
<svg style="left:441.0px;top:101.0px;" width="16" height="16" viewBox="0 0 16 16"><path d="M3.5 1.5h6l3 3v10h-9z" fill="#eef3fa" stroke="#9c7a2c"/><path d="M9.5 1.5v3h3" fill="#e8d49c" stroke="#9c7a2c"/><path d="M8.8 4.5v6.2c0 2-2.3 2.3-3.5 1.3" fill="none" stroke="#2e64a0" stroke-width="1.8"/><path d="M3.3 8.6c.5 0 .8.3 1.1.9l2.4 4.4c.4.8 0 1.4-.8 1.4H.6c-.8 0-1.2-.6-.8-1.4l2.4-4.4c.3-.6.6-.9 1.1-.9z" fill="#f8c858" stroke="#c08428" stroke-width=".9"/><path d="M3.3 10.2v2.4M3.3 13.4v.8" stroke="#2a2010" stroke-width="1.1"/></svg>
<div class="t" style="left:460px;top:102.81px;font-size:14.4px;color:#000;font-family:'Liberation Sans';">PhuongTrinhBacMotUI.java</div>
<svg style="left:641.0px;top:101.0px;" width="16" height="16" viewBox="0 0 16 16"><path d="M3 4.6L4.6 3 8 6.4 11.4 3 13 4.6 9.6 8 13 11.4 11.4 13 8 9.6 4.6 13 3 11.4 6.4 8z" fill="#fff" stroke="#5a5a5a" stroke-width="1" stroke-linejoin="round"/></svg>
<svg style="left:667.0px;top:101.0px;" width="16" height="16" viewBox="0 0 16 16"><path d="M3.5 1.5h6l3 3v10h-9z" fill="#eef3fa" stroke="#9c7a2c"/><path d="M9.5 1.5v3h3" fill="#e8d49c" stroke="#9c7a2c"/><path d="M8.8 4.5v6.2c0 2-2.3 2.3-3.5 1.3" fill="none" stroke="#2e64a0" stroke-width="1.8"/></svg>
<div class="t" style="left:686px;top:102.81px;font-size:14.4px;color:#000;font-family:'Liberation Sans';">TestPhuongTrinhBacMot.java</div>
<svg style="left:1468.0px;top:95.0px;" width="16" height="16" viewBox="0 0 16 16"><rect x="3.5" y="6.5" width="9" height="3" fill="#fff" stroke="#555" stroke-width="1"/></svg>
<svg style="left:1490.0px;top:98.0px;" width="16" height="16" viewBox="0 0 16 16"><rect x="3.5" y="3.5" width="10" height="10" fill="#fff" stroke="#555" stroke-width="1"/><path d="M3.5 5.5h10" stroke="#555"/></svg>
<div class="a" style="left:437px;top:125px;width:13px;height:757px;background:#f8f8f8"></div>
<div class="a" style="left:487px;top:123px;width:1px;height:760px;background:#f6f6f6"></div>
<div class="nums" style="top:124px"><div>59</div><div>60</div><div>61</div><div>62</div><div>63</div><div>64</div><div>65</div><div>66</div><div>67</div><div>68</div><div>69</div><div>70</div><div>71</div><div>72</div><div>73</div><div>74</div><div>75</div><div>76</div><div>77</div><div>78</div><div>79</div><div>80</div><div>81</div><div>82</div><div>83</div><div>84</div><div>85</div><div>86</div><div>87</div><div>88</div><div>89</div><div>90</div><div>91</div><div>92</div><div>93</div><div>94</div><div>95</div><div>96</div></div>
<div class="code" style="top:124px"><div>        }</div><div>&nbsp;</div><div>    }</div><div>    <i class="k">public</i> <i class="k">void</i> addControls(){</div><div>        Container <i class="l">container</i> = getContentPane();</div><div>        JPanel <i class="l">pnMain</i> = <i class="k">new</i> JPanel();</div><div>        <i class="l">pnMain</i>.setLayout(<i class="k">new</i> BoxLayout(<i class="l">pnMain</i>, BoxLayout.<i class="c">X_AXIS</i>));</div><div>        <i class="l">container</i>.add(<i class="l">pnMain</i>);</div><div>&nbsp;</div><div>        JPanel <i class="l">pnTitle</i> = <i class="k">new</i> JPanel();</div><div>        <i class="l">pnMain</i>.setLayout(<i class="k">new</i> FlowLayout());</div><div>        JLabel <i class="l">lblTitle</i> = <i class="k">new</i> JLabel(<i class="s">&quot;Giải Phương Trình Bậc Một&quot;</i>);</div><div>        <i class="l">pnTitle</i>.add(<i class="l">lblTitle</i>);</div><div>        <i class="l">lblTitle</i>.setForeground(Color.<i class="c">BLUE</i>);</div><div>        Font <i class="l">fontTitle</i> = <i class="k">new</i> Font(<i class="s">&quot;arial&quot;</i>, Font.<i class="c">BOLD</i>, 20);</div><div>        <i class="l">lblTitle</i>.setFont(<i class="l">fontTitle</i>);</div><div>        <i class="l">pnMain</i>.add(<i class="l">pnTitle</i>);</div><div>&nbsp;</div><div>        JPanel <i class="l">pnHeSoa</i> = <i class="k">new</i> JPanel();</div><div>        <i class="l">pnHeSoa</i>.setLayout(<i class="k">new</i> FlowLayout());</div><div>        JLabel <i class="l">lblHeSoa</i> = <i class="k">new</i> JLabel(<i class="s">&quot;Hệ Số a:&quot;</i>);</div><div>        <i class="f">txtHeSoa</i> = <i class="k">new</i> JTextField(15);</div><div>        <i class="l">pnHeSoa</i>.add(<i class="l">lblHeSoa</i>);</div><div>        <i class="l">pnHeSoa</i>.add(<i class="f">txtHeSoa</i>);</div><div>        <i class="l">pnMain</i>.add(<i class="l">pnHeSoa</i>);</div><div>&nbsp;</div><div>        JPanel <i class="l">pnHeSob</i> = <i class="k">new</i> JPanel();</div><div>        <i class="l">pnHeSob</i>.setLayout(<i class="k">new</i> FlowLayout());</div><div>        JLabel <i class="l">lblHeSob</i> = <i class="k">new</i> JLabel(<i class="s">&quot;Hệ Số b:&quot;</i>);</div><div>        <i class="f">txtHeSob</i> = <i class="k">new</i> JTextField(15);</div><div>        <i class="l">pnHeSoa</i>.add(<i class="l">lblHeSob</i>);</div><div>        <i class="l">pnHeSoa</i>.add(<i class="f">txtHeSob</i>);</div><div>        <i class="l">pnMain</i>.add(<i class="l">pnHeSob</i>);</div><div>&nbsp;</div><div>        JPanel <i class="l">pnButton</i> = <i class="k">new</i> JPanel();</div><div>        <i class="l">pnButton</i>.setLayout(<i class="k">new</i> FlowLayout());</div><div>        <i class="f">btnGiai</i> = <i class="k">new</i> JButton(<i class="s">&quot;Giải&quot;</i>);</div><div>        <i class="f">btnThoat</i> = <i class="k">new</i> JButton(<i class="s">&quot;Thoát&quot;</i>);</div></div>
<svg style="left:477.0px;top:187.0px;" width="10" height="10" viewBox="0 0 10 10"><circle cx="5" cy="5" r="4" fill="#e8eef6" stroke="#9aaabf" stroke-width=".9"/><path d="M2.8 5h4.4" stroke="#6a7a90" stroke-width="1"/></svg>
<div class="a" style="left:1483px;top:123px;width:20px;height:760px;background:#f0f0f0"></div>
<div class="a" style="left:1483px;top:471px;width:19px;height:212px;background:#cdcdcd"></div>
<svg style="left:1484.0px;top:127.0px;" width="16" height="16" viewBox="0 0 16 16"><path d="M4 9.5l4-4 4 4" fill="none" stroke="#444" stroke-width="1.6"/></svg>
<svg style="left:1484.0px;top:864.0px;" width="16" height="16" viewBox="0 0 16 16"><path d="M4 6.5l4 4 4-4" fill="none" stroke="#444" stroke-width="1.6"/></svg>
<div class="a" style="left:1503px;top:123px;width:14px;height:782px;background:#f8f8f8;border-radius:0 0 5px 0"></div>
<div class="a" style="left:1505px;top:129px;width:8px;height:8px;background:#f8c81c;border:1px solid #a0a0a0"></div>
<div class="a" style="left:1505px;top:251px;width:9px;height:4px;background:#fdf0b0;border:1px solid #e8d48a"></div>
<div class="a" style="left:437px;top:883px;width:50px;height:22px;background:#f8f8f8;border-radius:0 0 0 5px"></div>
<div class="a" style="left:487px;top:883px;width:996px;height:22px;background:#f0f0f0"></div>
<svg style="left:490.0px;top:885.0px;" width="16" height="16" viewBox="0 0 16 16"><path d="M9.5 4l-4 4 4 4" fill="none" stroke="#a8a8a8" stroke-width="1.4"/></svg>
<svg style="left:1462.0px;top:885.0px;" width="16" height="16" viewBox="0 0 16 16"><path d="M6.5 4l4 4-4 4" fill="none" stroke="#a8a8a8" stroke-width="1.4"/></svg>
<div class="a" style="left:1483px;top:883px;width:20px;height:22px;background:#f8f8f8"></div>
<div class="a" style="left:1522px;top:93px;width:362px;height:814px;background:#fff;border-radius:6px;border:1px solid #e6e9f2"></div>
<div class="a" style="left:1523px;top:94px;width:360px;height:29px;background:#f4f5fa;border-radius:5px 5px 0 0"></div>
<div class="a" style="left:1522px;top:93px;width:105px;height:30px;background:linear-gradient(#d6dfeb,#fdfdfe);border-radius:6px 6px 0 0;border:1px solid #d7dbe3;border-bottom:none"></div>
<svg style="left:1528.0px;top:101.0px;" width="16" height="16" viewBox="0 0 16 16"><path d="M3.5 1.5h9v12l-2-1.5-2 1.5-2-1.5-3 1.5z" fill="#fff" stroke="#444" stroke-width="1"/><path d="M4 11h8v2l-1.5-1-2 1.5-2-1.5-2.5 1.5z" fill="#a8a8e0"/><path d="M5 4.5h6M5 6.8h6M5 9.1h6" stroke="#333" stroke-width="1"/></svg>
<div class="t" style="left:1547px;top:102.81px;font-size:14.4px;color:#000;font-family:'Liberation Sans';">Task List</div>
<svg style="left:1606.0px;top:101.0px;" width="16" height="16" viewBox="0 0 16 16"><path d="M3 4.6L4.6 3 8 6.4 11.4 3 13 4.6 9.6 8 13 11.4 11.4 13 8 9.6 4.6 13 3 11.4 6.4 8z" fill="#fff" stroke="#5a5a5a" stroke-width="1" stroke-linejoin="round"/></svg>
<svg style="left:1833.0px;top:95.0px;" width="16" height="16" viewBox="0 0 16 16"><rect x="3.5" y="6.5" width="9" height="3" fill="#fff" stroke="#555" stroke-width="1"/></svg>
<svg style="left:1854.0px;top:98.0px;" width="16" height="16" viewBox="0 0 16 16"><rect x="3.5" y="3.5" width="10" height="10" fill="#fff" stroke="#555" stroke-width="1"/><path d="M3.5 5.5h10" stroke="#555"/></svg>
<svg style="left:1620.0px;top:128.0px;" width="16" height="16" viewBox="0 0 16 16"><path d="M2.5 5.5l2-2h7v11h-9z" fill="#eef2f8" stroke="#7a8aa0"/><path d="M12 0l1 2.5 2.5 1-2.5 1-1 2.5-1-2.5-2.5-1 2.5-1z" fill="#f5c518" stroke="#b08a10" stroke-width=".5"/></svg>
<svg style="left:1639.0px;top:128.0px;" width="16" height="16" viewBox="0 0 16 16"><path d="M3.5 6h9l-4.5 5z" fill="#000"/></svg>
<div class="a" style="left:1659px;top:128px;width:1px;height:18px;background:#8a8a8a"></div>
<div class="a" style="left:1665px;top:125px;width:23px;height:22px;background:#cce4f7;border:1px solid #99c9ef"></div>
<svg style="left:1668.0px;top:128.0px;" width="16" height="16" viewBox="0 0 16 16"><path d="M1.5 3.5h7v3h-7z" fill="#d8e4ee" stroke="#6a7a98" stroke-width="1"/><path d="M3 3.5l1-1.5h3l1 1.5" fill="#e8b8a0" stroke="#6a7a98" stroke-width=".8"/><path d="M4.5 6.5v8M4.5 10h3M4.5 14h3" stroke="#6a7a98" fill="none"/><rect x="7.5" y="8.5" width="3" height="3" fill="#fff" stroke="#6a7a98" stroke-width=".9"/><rect x="7.5" y="12.5" width="3" height="3" fill="#fff" stroke="#6a7a98" stroke-width=".9"/><path d="M10 4.5h5M12 10h3M12 14h3" stroke="#6a7a98"/></svg>
<svg style="left:1691.0px;top:128.0px;" width="16" height="16" viewBox="0 0 16 16"><circle cx="4.5" cy="4" r="3.3" fill="#fff" stroke="#6a7a98"/><path d="M4.5 2.3v1.9l1.4 1" stroke="#6a7a98" fill="none" stroke-width=".8"/><path d="M4.5 7.5v7M4.5 10h3M4.5 14h3" stroke="#6a7a98" fill="none"/><rect x="7.5" y="8.5" width="3" height="3" fill="#fff" stroke="#6a7a98" stroke-width=".9"/><rect x="7.5" y="12.5" width="3" height="3" fill="#fff" stroke="#6a7a98" stroke-width=".9"/><path d="M9 4.5h6M12 10h3M12 14h3" stroke="#6a7a98"/></svg>
<div class="a" style="left:1713px;top:128px;width:1px;height:18px;background:#8a8a8a"></div>
<svg style="left:1722.0px;top:128.0px;" width="16" height="16" viewBox="0 0 16 16"><circle cx="5.5" cy="4.5" r="3.2" fill="#cfcfcf"/><circle cx="11.5" cy="6.5" r="3.2" fill="#c4c4c4"/><circle cx="7" cy="11" r="3.3" fill="#7e6eaa"/></svg>
<div class="a" style="left:1744px;top:128px;width:1px;height:18px;background:#8a8a8a"></div>
<svg style="left:1753.0px;top:128.0px;" width="16" height="16" viewBox="0 0 16 16"><path d="M2 2l12 12M3 12l4-4" stroke="#2a4f9a" stroke-width="1.5"/></svg>
<svg style="left:1775.0px;top:128.0px;" width="16" height="16" viewBox="0 0 16 16"><circle cx="4.5" cy="3" r="2" fill="#e8a020"/><path d="M2.5 6h4v9h-4z" fill="#e8a020"/><circle cx="10" cy="3" r="2" fill="#888"/><path d="M8 6h4v9H8z" fill="#888"/><path d="M6 1l8 14" stroke="#2a4f9a" stroke-width="1.3"/></svg>
<svg style="left:1799.0px;top:128.0px;" width="16" height="16" viewBox="0 0 16 16"><rect x="0.5" y="0.5" width="12" height="11" fill="#e8eef8" stroke="#5a7aa5"/><rect x="3.5" y="3.5" width="12" height="11" fill="#fff" stroke="#5a7aa5"/><path d="M6 9h7" stroke="#2a5a9a" stroke-width="1.4"/></svg>
<div class="a" style="left:1821px;top:128px;width:1px;height:18px;background:#8a8a8a"></div>
<svg style="left:1829.0px;top:128.0px;" width="16" height="16" viewBox="0 0 16 16"><ellipse cx="11" cy="3" rx="4" ry="1.6" fill="#6a9ad0"/><path d="M7 3v11c0 1 8 1 8 0V3" fill="#5a8ac8" stroke="#3a6aa8" stroke-width=".8"/><path d="M1 9a4 4 0 0 1 7-2l-1 2M8 11a4 4 0 0 1-7 2l1-2" fill="none" stroke="#e8b020" stroke-width="1.8"/></svg>
<svg style="left:1858.0px;top:126.0px;" width="16" height="16" viewBox="0 0 16 16"><path d="M3 4.5h10l-5 5z" fill="#fff" stroke="#555" stroke-width="1"/></svg>
<div class="a" style="left:1529px;top:152px;width:127px;height:24px;background:#fff;border:1px solid #a0a0a0"></div>
<div class="t" style="left:1541px;top:157.81px;font-size:14.4px;color:#6d6d6d;font-family:'Liberation Sans';">Find</div>
<svg style="left:1637.0px;top:156.0px;" width="14" height="14" viewBox="0 0 14 14"><circle cx="6" cy="6" r="3.8" fill="#f8f8f8" stroke="#666" stroke-width="1.2"/><path d="M9 9l4 4" stroke="#444" stroke-width="2"/></svg>
<svg style="left:1664.0px;top:156.0px;" width="16" height="16" viewBox="0 0 16 16"><path d="M6 4l4 4-4 4z" fill="#333"/></svg>
<div class="t" style="left:1684px;top:157.81px;font-size:14.4px;color:#2a62c9;font-family:'Liberation Sans';">All</div>
<svg style="left:1708.0px;top:156.0px;" width="16" height="16" viewBox="0 0 16 16"><path d="M6 4l4 4-4 4z" fill="#333"/></svg>
<div class="t" style="left:1728px;top:157.81px;font-size:14.4px;color:#2a62c9;font-family:'Liberation Sans';">Activate...</div>
<svg style="left:1863.0px;top:156.0px;" width="16" height="16" viewBox="0 0 16 16"><circle cx="8" cy="8" r="6.5" fill="#fff" stroke="#2a5a9a" stroke-width="1.1"/><text x="5" y="12.2" font-size="10.5" font-weight="bold" fill="#2a5a9a" font-family="Liberation Sans">?</text></svg>
<div class="a" style="left:1887px;top:94px;width:31px;height:57px;background:#e9edf8;border:1px solid #c8d0e0;border-radius:6px"></div>
<div class="a" style="left:1895px;top:100px;width:2px;height:2px;background:#b0a488"></div>
<div class="a" style="left:1900px;top:100px;width:2px;height:2px;background:#b0a488"></div>
<div class="a" style="left:1905px;top:100px;width:2px;height:2px;background:#b0a488"></div>
<div class="a" style="left:1910px;top:100px;width:2px;height:2px;background:#b0a488"></div>
<svg style="left:1897.0px;top:108.0px;" width="12" height="12" viewBox="0 0 12 12"><rect x="1.5" y="4.5" width="6" height="4" fill="#fff" stroke="#444"/><path d="M4 4.5V2.5h6v4H7.5" fill="none" stroke="#444"/></svg>
<svg style="left:1894.0px;top:128.0px;" width="16" height="16" viewBox="0 0 16 16"><rect x="1.5" y="1.5" width="5" height="5" fill="#cfe2f6" stroke="#2a6ac0"/><rect x="1.5" y="10.5" width="5" height="5" fill="#cfe2f6" stroke="#2a6ac0"/><path d="M8 4h6M10 8.5h4M8 13h6" stroke="#2a6ac0" stroke-width="1"/><rect x="8" y="7.5" width="2" height="2" fill="none" stroke="#2a6ac0" stroke-width=".8"/></svg>
<div class="a" style="left:435px;top:911px;width:1449px;height:90px;background:#fff;border-radius:6px;border:1px solid #e6e9f2"></div>
<div class="a" style="left:436px;top:912px;width:1447px;height:28px;background:#f4f5fa;border-radius:5px 5px 0 0"></div>
<div class="a" style="left:717px;top:911px;width:103px;height:29px;background:linear-gradient(#d6dfeb,#fdfdfe);border-radius:6px 6px 0 0;border:1px solid #d7dbe3;border-bottom:none"></div>
<svg style="left:438.0px;top:919.0px;" width="16" height="16" viewBox="0 0 16 16"><rect x="1.5" y="1.5" width="13" height="13" fill="#fff" stroke="#c8c8d8"/><circle cx="6" cy="5" r="3" fill="#e05050"/><path d="M10 3v10M10 13h3" stroke="#9ab" /><path d="M4.5 9.5l3 5.5h-6z" fill="#f2c04a" stroke="#b07a18" stroke-width=".8"/></svg>
<div class="t" style="left:459px;top:919.81px;font-size:14.4px;color:#8c96a8;font-family:'Liberation Sans';">Problems</div>
<div class="t" style="left:533px;top:921.00px;font-size:13px;color:#5a8ac8;font-family:'Liberation Sans';">@</div>
<div class="t" style="left:551px;top:919.81px;font-size:14.4px;color:#8c96a8;font-family:'Liberation Sans';">Javadoc</div>
<svg style="left:615.0px;top:919.0px;" width="16" height="16" viewBox="0 0 16 16"><path d="M2.5 1.5h7l3 3v10h-10z" fill="#fbf4e0" stroke="#c8a060"/><path d="M6 5c-1 0-1 1-1 2s-1 1-1 1 1 0 1 1 0 2 1 2M8 5c1 0 1 1 1 2s1 1 1 1-1 0-1 1 0 2-1 2" stroke="#5a8ac8" fill="none" stroke-width=".8"/><path d="M10 10l4 3-4 3z" fill="#e8b030"/></svg>
<div class="t" style="left:632px;top:919.81px;font-size:14.4px;color:#8c96a8;font-family:'Liberation Sans';">Declaration</div>
<svg style="left:721.0px;top:919.0px;" width="16" height="16" viewBox="0 0 16 16"><rect x="1.5" y="2.5" width="13" height="9" fill="#fff" stroke="#2a5a9a" stroke-width="1.5"/><path d="M4 5.5h7M4 8h5" stroke="#2a5a9a"/><path d="M6 12h4v2H5z" fill="#2a5a9a"/></svg>
<div class="t" style="left:740px;top:919.81px;font-size:14.4px;color:#000;font-family:'Liberation Sans';">Console</div>
<svg style="left:797.0px;top:919.0px;" width="16" height="16" viewBox="0 0 16 16"><path d="M3 4.6L4.6 3 8 6.4 11.4 3 13 4.6 9.6 8 13 11.4 11.4 13 8 9.6 4.6 13 3 11.4 6.4 8z" fill="#fff" stroke="#5a5a5a" stroke-width="1" stroke-linejoin="round"/></svg>
<svg style="left:822.0px;top:919.0px;" width="16" height="16" viewBox="0 0 16 16"><rect x="1.5" y="2.5" width="5" height="4" fill="#fff" stroke="#8a8a8a"/><rect x="9.5" y="9.5" width="5" height="4" fill="#fff" stroke="#8a8a8a"/><path d="M4 6.5v5h5M7 4.5h5v5" fill="none" stroke="#8a8a8a"/><path d="M10 3l2 1.5-2 1.5" fill="none" stroke="#8a8a8a"/></svg>
<div class="t" style="left:843px;top:919.81px;font-size:14.4px;color:#8c96a8;font-family:'Liberation Sans';">Diagrams</div>
<svg style="left:1526.0px;top:919.0px;" width="16" height="16" viewBox="0 0 16 16"><rect x="2.5" y="2.5" width="11" height="11" rx="1.5" fill="#a8a8a8" stroke="#c8c8c8"/></svg>
<svg style="left:1549.0px;top:919.0px;" width="16" height="16" viewBox="0 0 16 16"><path d="M3 5l2-2 3 3 3-3 2 2-3 3 3 3-2 2-3-3-3 3-2-2 3-3z" fill="#777" stroke="#555" stroke-width=".6"/></svg>
<svg style="left:1572.0px;top:919.0px;" width="16" height="16" viewBox="0 0 16 16"><path d="M1 3l2-2 2.5 2.5L8 1l2 2-2.5 2.5L10 8 8 10 5.5 7.5 3 10 1 8l2.5-2.5z" fill="#e8e8e8" stroke="#777" stroke-width=".6"/><path d="M5 8l2-2 3 3 3-3 2 2-3 3 3 3-2 2-3-3-3 3-2-2 3-3z" fill="#777" stroke="#555" stroke-width=".6"/></svg>
<div class="a" style="left:1594px;top:918px;width:1px;height:18px;background:#8a8a8a"></div>
<svg style="left:1602.0px;top:919.0px;" width="16" height="16" viewBox="0 0 16 16"><path d="M2.5 1.5h6l3 3v9h-9z" fill="#f4f4f4" stroke="#bbb"/><path d="M4 5h5M4 7h5M4 9h5" stroke="#bbb"/><path d="M10 10l4 4M14 10l-4 4" stroke="#aaa" stroke-width="1.8"/></svg>
<svg style="left:1626.0px;top:919.0px;" width="16" height="16" viewBox="0 0 16 16"><rect x="8.5" y="1.5" width="6" height="13" fill="#fff" stroke="#5a7aa5"/><rect x="2.5" y="1.5" width="5" height="13" fill="#fff" stroke="#5a7aa5"/><rect x="1" y="8" width="7" height="6" fill="#e8b020" stroke="#a07010" stroke-width=".7"/><path d="M2.5 8V6a2 2 0 0 1 4 0v2" fill="none" stroke="#a07010"/></svg>
<svg style="left:1648.0px;top:919.0px;" width="16" height="16" viewBox="0 0 16 16"><rect x="1.5" y="1.5" width="11" height="12" fill="#fdf6dc" stroke="#b08a30"/><path d="M3.5 4h7M3.5 6.5h5M3.5 9h4" stroke="#4a7ab5" stroke-width="1"/><path d="M14 5v6h-6m2-2.5l-2.5 2.5 2.5 2.5" fill="none" stroke="#e0a010" stroke-width="1.8"/></svg>
<div class="a" style="left:1669px;top:916px;width:46px;height:23px;background:#cce4f7;border:1px solid #99c9ef"></div>
<div class="a" style="left:1692px;top:916px;width:1px;height:23px;background:#99c9ef"></div>
<svg style="left:1673.0px;top:919.0px;" width="16" height="16" viewBox="0 0 16 16"><rect x="4.5" y="1.5" width="11" height="8" fill="#fff" stroke="#2a5a9a"/><path d="M6.5 4h7M6.5 6.5h5" stroke="#2a5a9a"/><rect x="0.5" y="6.5" width="7" height="6" fill="#cce" stroke="#2a5a9a"/><path d="M2 14h4" stroke="#2a5a9a" stroke-width="1.5"/></svg>
<svg style="left:1696.0px;top:919.0px;" width="16" height="16" viewBox="0 0 16 16"><rect x="4.5" y="1.5" width="11" height="8" fill="#fff" stroke="#2a5a9a"/><path d="M6 3l3 3M9 3L6 6" stroke="#e02020" stroke-width="1.3"/><path d="M10.5 4h3M10.5 6.5h3" stroke="#2a5a9a"/><rect x="0.5" y="6.5" width="7" height="6" fill="#cce" stroke="#2a5a9a"/><path d="M2 14h4" stroke="#2a5a9a" stroke-width="1.5"/></svg>
<div class="a" style="left:1717px;top:918px;width:1px;height:18px;background:#333"></div>
<svg style="left:1727.0px;top:919.0px;" width="16" height="16" viewBox="0 0 16 16"><rect x="1.5" y="4.5" width="13" height="10" fill="#fff" stroke="#7a8aa0"/><rect x="1.5" y="4.5" width="13" height="2.5" fill="#5b9bd5"/><path d="M8 10l4-5" stroke="#666"/><circle cx="12.5" cy="3.5" r="2.5" fill="#3cb54a"/></svg>
<svg style="left:1751.0px;top:919.0px;" width="16" height="16" viewBox="0 0 16 16"><rect x="1.5" y="1.5" width="13" height="10" fill="#fff" stroke="#2a5a9a" stroke-width="1.6"/><path d="M4 5h8M4 8h6" stroke="#2a5a9a"/><path d="M5 13h6v2H5z" fill="#2a5a9a"/></svg>
<svg style="left:1770.0px;top:919.0px;" width="16" height="16" viewBox="0 0 16 16"><path d="M3.5 6h9l-4.5 5z" fill="#000"/></svg>
<svg style="left:1793.0px;top:919.0px;" width="16" height="16" viewBox="0 0 16 16"><rect x="1.5" y="4.5" width="12" height="10" fill="#fdf6dc" stroke="#9c7a2c"/><rect x="1.5" y="4.5" width="12" height="2.5" fill="#5b9bd5" stroke="#3a6ea5"/><path d="M12 0l1 2.5 2.5 1-2.5 1-1 2.5-1-2.5-2.5-1 2.5-1z" fill="#f5c518" stroke="#b08a10" stroke-width=".5"/></svg>
<svg style="left:1812.0px;top:919.0px;" width="16" height="16" viewBox="0 0 16 16"><path d="M3.5 6h9l-4.5 5z" fill="#000"/></svg>
<svg style="left:1833.0px;top:913.0px;" width="16" height="16" viewBox="0 0 16 16"><rect x="3.5" y="6.5" width="9" height="3" fill="#fff" stroke="#555" stroke-width="1"/></svg>
<svg style="left:1855.0px;top:916.0px;" width="16" height="16" viewBox="0 0 16 16"><rect x="3.5" y="3.5" width="10" height="10" fill="#fff" stroke="#555" stroke-width="1"/><path d="M3.5 5.5h10" stroke="#555"/></svg>
<div class="t" style="left:439px;top:946.51px;font-size:14.75px;color:#000;font-family:'Liberation Sans';">&lt;terminated&gt; TestPhuongTrinhBacMot [Java Application] C:\Program Files\Java\jre1.8.0_121\bin\javaw.exe (Mar 21, 2017, 8:59:09 PM)</div>
<div class="a" style="left:438px;top:963px;width:1442px;height:1px;background:#a0a0a0"></div>
<div class="a" style="left:437px;top:977px;width:1424px;height:21px;background:#f0f0f0"></div>
<div class="a" style="left:1861px;top:964px;width:21px;height:34px;background:#f0f0f0;border-radius:0 0 5px 0"></div>
<svg style="left:1866.0px;top:966.0px;" width="10" height="10" viewBox="0 0 10 10"><path d="M5 1.5l1.5 2h-3z" fill="#555"/><path d="M2 6.5v1.5h1.5M8 6.5v1.5H6.5" stroke="#555" fill="none" stroke-width="1"/></svg>
<svg style="left:439.0px;top:979.0px;" width="16" height="16" viewBox="0 0 16 16"><path d="M9.5 4l-4 4 4 4" fill="none" stroke="#a8a8a8" stroke-width="1.4"/></svg>
<svg style="left:1841.0px;top:979.0px;" width="16" height="16" viewBox="0 0 16 16"><path d="M6.5 4l4 4-4 4" fill="none" stroke="#a8a8a8" stroke-width="1.4"/></svg>
<div class="a" style="left:1179px;top:1004px;width:1px;height:23px;background:#a8acb8"></div>
<div class="a" style="left:1313px;top:1004px;width:1px;height:23px;background:#a8acb8"></div>
<div class="a" style="left:1439px;top:1004px;width:1px;height:23px;background:#a8acb8"></div>
<div class="t" style="left:1187px;top:1008.56px;font-size:14.7px;color:#000;font-family:'Liberation Sans';">Writable</div>
<div class="t" style="left:1321px;top:1008.98px;font-size:14.2px;color:#000;font-family:'Liberation Sans';">Smart Insert</div>
<div class="t" style="left:1447px;top:1008.98px;font-size:14.2px;color:#000;font-family:'Liberation Sans';">121 : 30</div>
<div class="a" style="left:1563px;top:1008px;width:2px;height:2px;background:#b4a88e"></div><div class="a" style="left:1563px;top:1012px;width:2px;height:2px;background:#b4a88e"></div><div class="a" style="left:1563px;top:1016px;width:2px;height:2px;background:#b4a88e"></div><div class="a" style="left:1563px;top:1020px;width:2px;height:2px;background:#b4a88e"></div><div class="a" style="left:1563px;top:1024px;width:2px;height:2px;background:#b4a88e"></div>
<div class="a" style="left:0px;top:1030px;width:1920px;height:50px;background:#000"></div>
<svg style="left:20.0px;top:1045.0px;" width="20" height="20" viewBox="0 0 20 20"><path d="M0 2.8l7.8-1.1v7.5H0zM8.9 1.5L19.5 0v9.2H8.9zM0 10.3h7.8v7.5L0 16.7zM8.9 10.3h10.6v9.2l-10.6-1.5z" fill="#fff"/></svg>
<svg style="left:79.0px;top:1044.0px;" width="22" height="22" viewBox="0 0 22 22"><circle cx="14.5" cy="7.5" r="6.3" fill="none" stroke="#fff" stroke-width="1.3"/><path d="M10 12L1.5 20.5" stroke="#fff" stroke-width="1.4"/></svg>
<svg style="left:137.0px;top:1044.0px;" width="26" height="22" viewBox="0 0 26 22"><rect x="5.5" y="2.5" width="15" height="17" fill="none" stroke="#fff" stroke-width="1.3"/><path d="M2.5 4.5H1v12.5h1.5M23.5 4.5H25v12.5h-1.5" fill="none" stroke="#fff" stroke-width="1.2"/></svg>
<svg style="left:200.0px;top:1041.0px;" width="27" height="29" viewBox="0 0 27 29"><path d="M1 6.5L26 3.5v25L1 25.5z" fill="#fff"/><path d="M7.5 6V4.5c0-2.3 1.7-4 3.7-4s3.5 1.7 3.5 4V5M11 5V4c0-2.3 1.7-4 3.7-4s3.5 1.7 3.5 4v1" fill="none" stroke="#fff" stroke-width="1.1"/><path d="M4 12.5l5-.5v5l-5 .3zM10 12l5-.6v5.2l-5 .3zM4 18.5l5-.3v5l-5-.3zM10 18.2l5-.3v5.2l-5-.3z" fill="#000"/></svg>
<svg style="left:261.0px;top:1042.0px;" width="29" height="24" viewBox="0 0 29 24"><path d="M1 2.5a1 1 0 0 1 1-1h8l2.5 2.5H27v19H1z" fill="#e8b84a"/><rect x="3" y="3" width="5" height="1.6" fill="#fff"/><path d="M1 6.5h27v16.5H1z" fill="#fde18a"/><path d="M1 6.5h27v1.5H1z" fill="#f6c95a"/><path d="M7 23.5v-10h14v10h-4v-6h-6v6z" fill="#2d9be8"/></svg>
<div class="a" style="left:251px;top:1077px;width:51px;height:3px;background:#76b9ed"></div>
<svg style="left:325.0px;top:1041.5px;" width="26" height="27" viewBox="0 0 26 27"><path d="M4.5 13.5C4.5 6 9.5 1.5 15 1.5c6 0 9.5 4 9.5 10v2.3H10.5c.3 4.5 3.3 6.5 7 6.5 2.5 0 4.8-.7 6.5-1.8v5.2c-2 1-4.5 1.8-7.5 1.8C9.5 25.5 4.5 21 4.5 13.5zM10.7 10h8.6c0-3-1.8-4.6-4.2-4.6-2.6 0-4.2 1.8-4.4 4.6z" fill="#1a78d6"/><path d="M1 11C2.5 4 8.5 0 15 .8 9.5 1.2 6 4.5 5 9z" fill="#1a78d6"/></svg>
<svg style="left:385.5px;top:1041.0px;" width="28" height="28" viewBox="0 0 28 28"><circle cx="14" cy="14" r="13.5" fill="#db4437"/><path d="M14 14L3 20.5A13.5 13.5 0 0 0 14 27.5z" fill="#0f9d58"/><path d="M1.2 9.5A13.5 13.5 0 0 0 3 20.5L8.5 11z" fill="#0f9d58"/><path d="M14 14h13.5A13.5 13.5 0 0 1 14 27.5l5.5-10z" fill="#ffcd40"/><path d="M14 8h13a13.5 13.5 0 0 1 .5 6H19z" fill="#ffcd40"/><circle cx="14" cy="14" r="6.2" fill="#fff"/><circle cx="14" cy="14" r="5" fill="#4285f4"/></svg>
<div class="a" style="left:375px;top:1077px;width:51px;height:3px;background:#76b9ed"></div>
<div class="a" style="left:432px;top:1030px;width:61px;height:50px;background:#333"></div>
<div class="a" style="left:432px;top:1077px;width:61px;height:3px;background:#76b9ed"></div>
<svg style="left:446.5px;top:1041.0px;" width="31" height="28" viewBox="0 0 31 28"><defs><linearGradient id="eg2" x1="0" y1="0" x2="0" y2="1"><stop offset="0" stop-color="#3d3080"/><stop offset="1" stop-color="#251c50"/></linearGradient></defs><path d="M14 0.5A14 14 0 0 0 14 28 14.5 13 0 0 1 14 .5z" fill="#f7941e"/><circle cx="17.5" cy="14.2" r="12.6" fill="url(#eg2)"/><rect x="5" y="10" width="25" height="1.8" fill="#fff"/><rect x="4.8" y="13.3" width="25.5" height="1.8" fill="#fff"/><rect x="5" y="16.6" width="25" height="1.8" fill="#fff"/></svg>
<div class="a" style="left:499px;top:1030px;width:29px;height:50px;background:#5a5a16"></div>
<div class="a" style="left:528px;top:1030px;width:22px;height:50px;background:#1e1e1e"></div>
<div class="a" style="left:499px;top:1077px;width:51px;height:3px;background:#f0e040"></div>
<svg style="left:510.0px;top:1040.0px;" width="28" height="30" viewBox="0 0 28 30"><path d="M2 9L25 2l1.5 4.5-23 7z" fill="#fff" stroke="#222" stroke-width=".8"/><path d="M6 8l3-5M11 6.5l3-5M16 5l3-5M21 3.5l3-5" stroke="#222" stroke-width="1.6"/><rect x="2.5" y="11" width="19" height="16" fill="#f6f6f6" stroke="#ccc" stroke-width=".6"/><text x="3.5" y="24.5" font-size="13" font-weight="bold" fill="#e05a20" font-family="Liberation Sans">3</text><rect x="13" y="12" width="2.5" height="10" fill="#3a8a3a"/><rect x="17" y="12" width="4" height="17" rx="2" fill="#a8c8f0" stroke="#4a7ac0" stroke-width=".6"/><rect x="23" y="12" width="4" height="17" rx="2" fill="#a8c8f0" stroke="#4a7ac0" stroke-width=".6"/></svg>
<svg style="left:1550.0px;top:1048.0px;" width="16" height="14" viewBox="0 0 16 14"><path d="M2 10l6-6 6 6" fill="none" stroke="#fff" stroke-width="1.3"/></svg>
<svg style="left:1578.0px;top:1045.0px;" width="20" height="20" viewBox="0 0 20 20"><path d="M1 7h3l5-4v14l-5-4H1z" fill="none" stroke="#fff" stroke-width="1.1"/><path d="M12 6a5 5 0 0 1 0 8M14.5 4a8 8 0 0 1 0 12M17 2a11 11 0 0 1 0 16" fill="none" stroke="#fff" stroke-width="1.1"/></svg>
<svg style="left:1609.0px;top:1047.0px;" width="20" height="16" viewBox="0 0 20 16"><path d="M3 14a4 4 0 0 1 1-8 6 6 0 0 1 11-1 4.5 4.5 0 0 1 4 9z" fill="#1e78d8"/></svg>
<svg style="left:1639.0px;top:1047.0px;" width="20" height="16" viewBox="0 0 20 16"><path d="M3 14a4 4 0 0 1 1-8 6 6 0 0 1 11-1 4.5 4.5 0 0 1 4 9z" fill="#fff"/></svg>
<svg style="left:1671.0px;top:1046.0px;" width="18" height="18" viewBox="0 0 18 18"><path d="M2 16A14 14 0 0 1 16 2M5 16A11 11 0 0 1 16 5M8 16a8 8 0 0 1 8-8M11 16a5 5 0 0 1 5-5" fill="none" stroke="#fff" stroke-width="1"/><circle cx="15" cy="15" r="1.5" fill="#fff"/></svg>
<svg style="left:1696.0px;top:1047.0px;" width="24" height="18" viewBox="0 0 24 18"><rect x="4.5" y="5.5" width="17" height="9" fill="none" stroke="#fff" stroke-width="1.1"/><rect x="6" y="7" width="14" height="6" fill="#fff"/><rect x="21.5" y="8" width="2" height="4" fill="#fff"/><path d="M3 3v4M1 4h4" stroke="#fff"/></svg>
<div class="t" style="left:1731px;top:1048.64px;font-size:14.6px;color:#fff;font-family:'Liberation Sans';">ENG</div>
<div class="t" style="left:1780px;top:1036.90px;font-size:14.3px;color:#fff;font-family:'Liberation Sans';">08:59 PM</div>
<div class="t" style="left:1776px;top:1059.22px;font-size:15.1px;color:#fff;font-family:'Liberation Sans';">21-Mar-17</div>
<svg style="left:1869.0px;top:1045.0px;" width="20" height="20" viewBox="0 0 20 20"><path d="M.5 .5h19v16h-8l-1.5 2-1.5-2h-8z" fill="none" stroke="#fff" stroke-width="1.1"/></svg>
<div class="a" style="left:1915px;top:1030px;width:1px;height:50px;background:#444"></div>
</body></html>
